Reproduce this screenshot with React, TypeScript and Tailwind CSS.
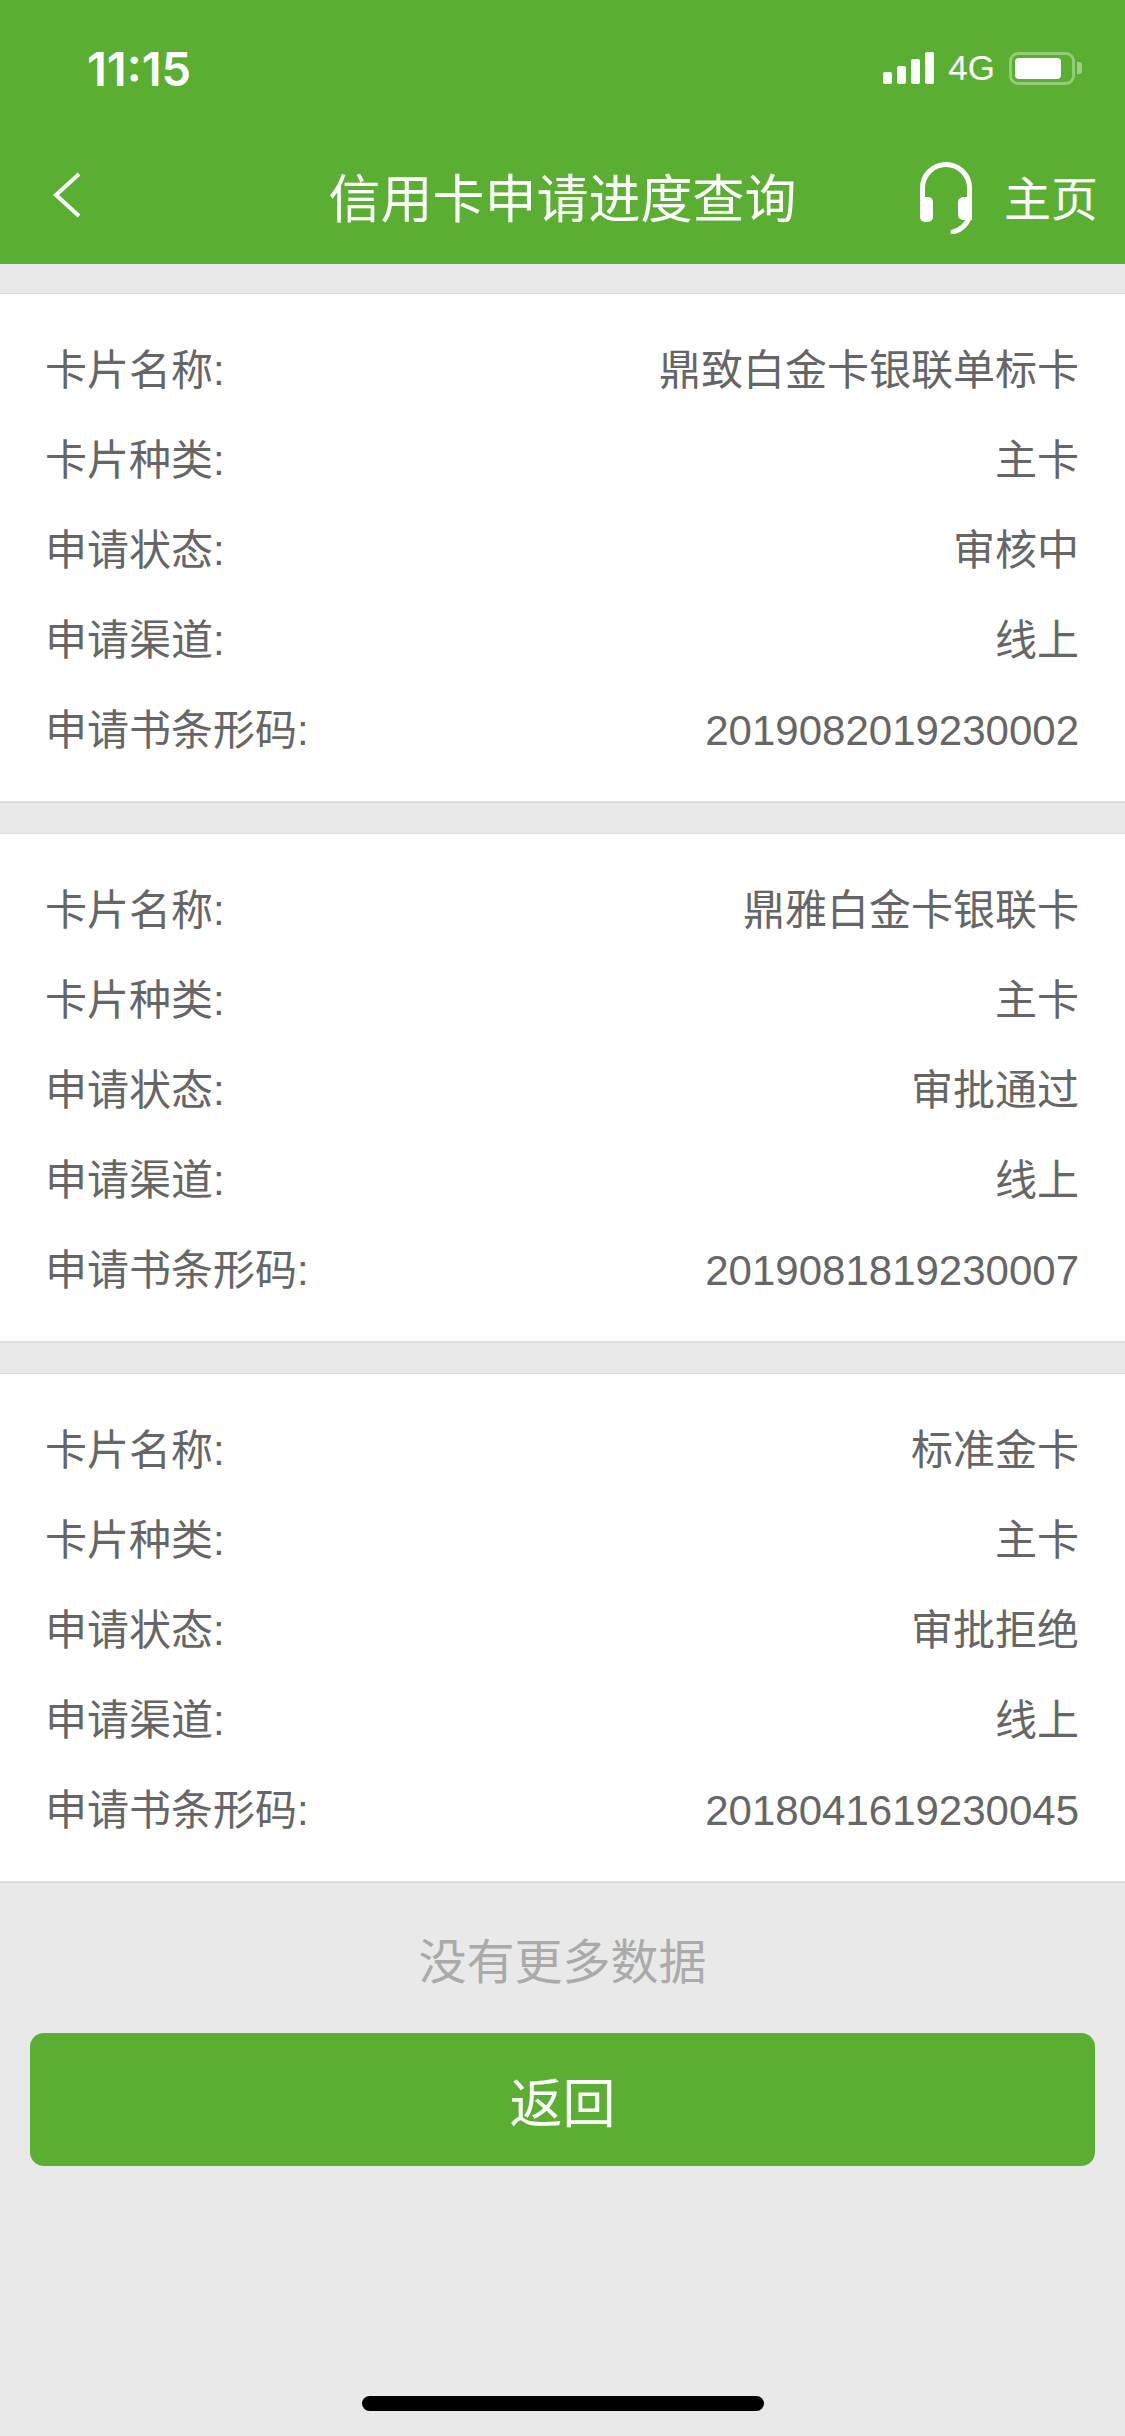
const records = [
  { name: "鼎致白金卡银联单标卡", kind: "主卡", status: "审核中", channel: "线上", code: "2019082019230002" },
  { name: "鼎雅白金卡银联卡", kind: "主卡", status: "审批通过", channel: "线上", code: "2019081819230007" },
  { name: "标准金卡", kind: "主卡", status: "审批拒绝", channel: "线上", code: "2018041619230045" },
];

function Row({ label, value }: { label: string; value: string }) {
  return (
    <div className="flex h-[90px] items-center justify-between pt-[3px] text-[42px] text-[#666666]">
      <span>{label}</span>
      <span>{value}</span>
    </div>
  );
}

function SignalBars() {
  return (
    <div className="flex items-end gap-[5px]">
      <div className="h-[12px] w-[9px] rounded-[2px] bg-white" />
      <div className="h-[18px] w-[9px] rounded-[2px] bg-white" />
      <div className="h-[25px] w-[9px] rounded-[2px] bg-white" />
      <div className="h-[32px] w-[9px] rounded-[2px] bg-white" />
    </div>
  );
}

function Battery() {
  return (
    <div className="flex items-center gap-[2px]">
      <div className="flex h-[33px] w-[66px] items-center rounded-[9px] border-[3px] border-white/35 p-[3px]">
        <div className="h-full w-[46px] rounded-[4px] bg-white" />
      </div>
      <div className="h-[12px] w-[5px] rounded-r-[3px] bg-white/40" />
    </div>
  );
}

function Headset() {
  return (
    <svg width="52" height="72" viewBox="0 0 52 72" fill="none" className="mb-[5px]">
      <path d="M2.5 38V26a23.5 23.5 0 0 1 47 0v12" stroke="white" strokeWidth="5" />
      <rect x="0" y="35" width="13" height="25" rx="5" fill="white" />
      <path d="M44 35c-3 0-6 2-6 5v13c0 3 3 5 6 5h8V35z" fill="white" />
      <path d="M49 56c-3 8-9 12-16 14" stroke="white" strokeWidth="5" strokeLinecap="round" />
    </svg>
  );
}

export default function App() {
  return (
    <div className="flex min-h-[2436px] flex-col bg-[#e9e9e9] font-['Liberation_Sans','Noto_Sans_CJK_SC',sans-serif]">
      <header className="h-[264px] bg-[#5aaf33] text-white">
        <div className="flex h-[136px] items-center justify-between pl-[87px] pr-[43px]">
          <span className="pt-[2px] font-['Inter',sans-serif] text-[47px] font-semibold">11:15</span>
          <div className="flex items-center">
            <SignalBars />
            <span className="mx-[14px] text-[35px]">4G</span>
            <Battery />
          </div>
        </div>
        <div className="relative flex h-[128px] items-center justify-between pl-[52px] pr-[27px]">
          <svg width="30" height="46" viewBox="0 0 30 46" fill="none" className="mb-[10px]">
            <path d="M27 2L4 23l23 21" stroke="white" strokeWidth="4" />
          </svg>
          <h1 className="absolute left-0 right-0 text-center text-[52px]">信用卡申请进度查询</h1>
          <div className="flex items-center gap-[32px]">
            <Headset />
            <span className="text-[47px]">主页</span>
          </div>
        </div>
      </header>

      <main className="mt-[29px] flex flex-col gap-[30px]">
        {records.map((r) => (
          <section key={r.code} className="border-t border-b-2 border-[#dedede] bg-white pl-[45px] pr-[46px] pt-[30px] pb-[27px]">
            <Row label="卡片名称:" value={r.name} />
            <Row label="卡片种类:" value={r.kind} />
            <Row label="申请状态:" value={r.status} />
            <Row label="申请渠道:" value={r.channel} />
            <Row label="申请书条形码:" value={r.code} />
          </section>
        ))}
      </main>

      <p className="mt-[47px] text-center text-[48px] leading-[66px] text-[#aaaaaa]">没有更多数据</p>

      <div className="mt-[37px] px-[30px]">
        <button type="button" className="h-[133px] w-full rounded-[14px] bg-[#5aaf33] pt-[11px] text-[53px] text-white">
          返回
        </button>
      </div>

      <div className="mx-auto mt-[230px] h-[15px] w-[402px] rounded-full bg-black" />
    </div>
  );
}
